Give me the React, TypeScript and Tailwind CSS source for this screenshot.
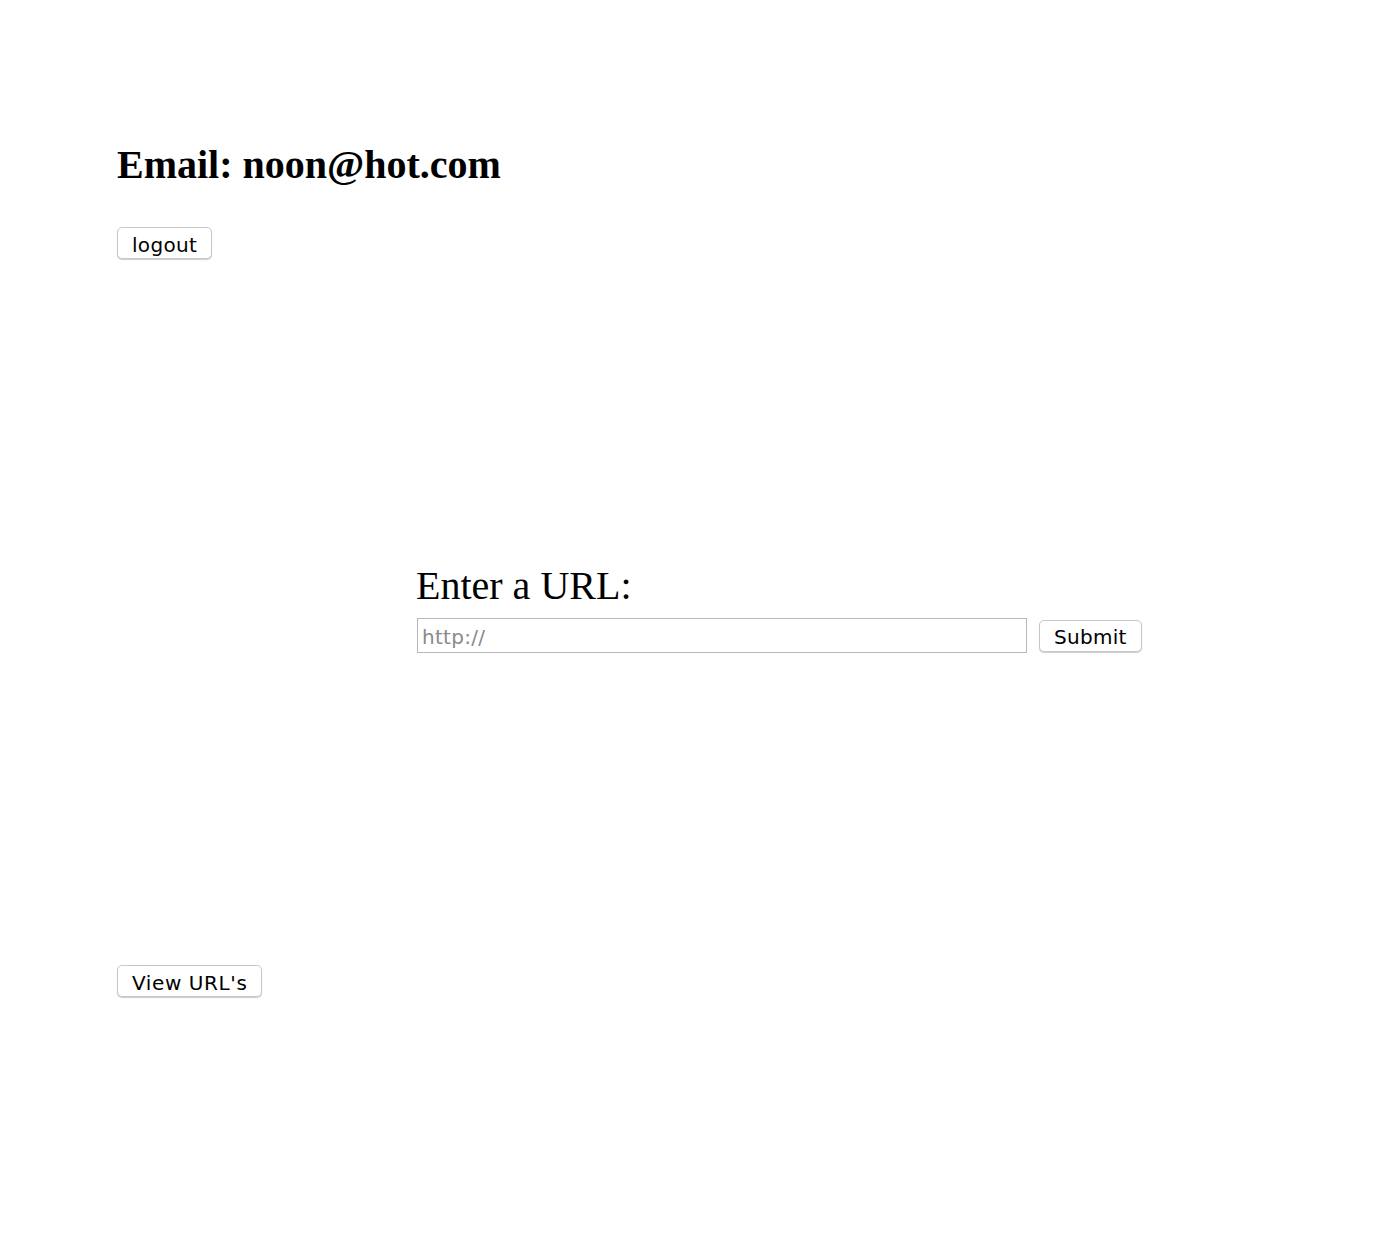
import React from "react";

const btn =
  "h-[32px] px-[14px] pt-[3px] rounded-[5px] border border-[#c8c8c8] bg-white shadow-[0_1px_1px_rgba(0,0,0,0.2)] text-[20px] leading-none tracking-[0.3px] text-black font-['DejaVu_Sans',Verdana,sans-serif]";

export default function App() {
  return (
    <div className="min-h-[1234px] bg-white text-black">
      <div className="pl-[117px] pt-[140px]">
        <h1 className="font-['Liberation_Serif','Times_New_Roman',serif] font-bold text-[40px] leading-[50px]">
          Email: noon@hot.com
        </h1>
        <div className="mt-[37px]">
          <button className={btn}>logout</button>
        </div>
      </div>
      <div className="pl-[416px] mt-[304px]">
        <div className="font-['Liberation_Serif','Times_New_Roman',serif] text-[40px] leading-[46px]">
          Enter a URL:
        </div>
        <div className="mt-[9px] flex items-center gap-[12px]">
          <input
            placeholder="http://"
            className="ml-[1px] w-[610px] h-[35px] border border-[#b8b8b8] px-[4px] pt-[2px] text-[20px] tracking-[0.3px] font-['DejaVu_Sans',Verdana,sans-serif] placeholder:text-[#8a8a8a] outline-none"
          />
          <button className={btn}>Submit</button>
        </div>
      </div>
      <div className="pl-[117px] mt-[312px]">
        <button className={`${btn} tracking-[0.6px]`}>View URL's</button>
      </div>
    </div>
  );
}
